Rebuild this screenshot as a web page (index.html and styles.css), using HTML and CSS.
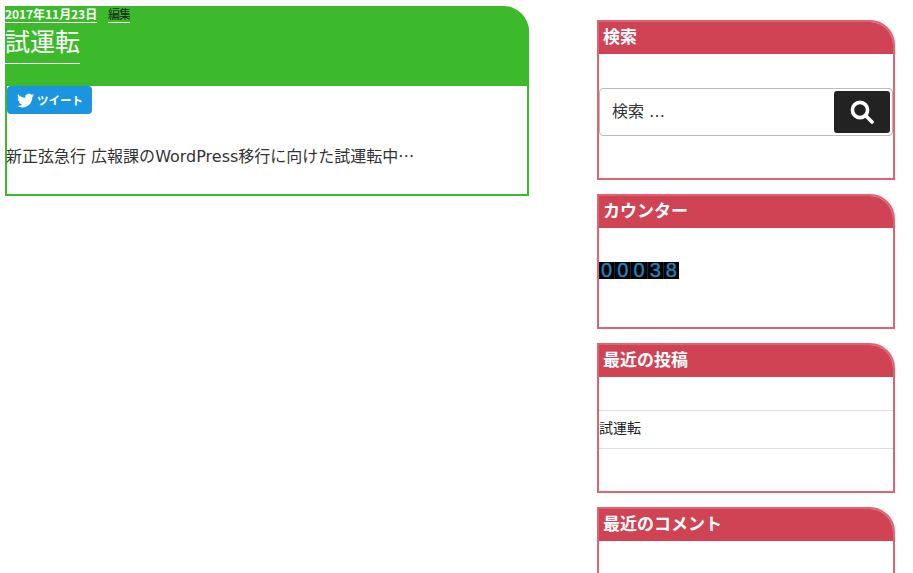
FILE: index.html
```html
<!DOCTYPE html>
<html lang="ja">
<head>
<meta charset="utf-8">
<title>試運転</title>
<link rel="stylesheet" href="styles.css">
</head>
<body>
<div class="page">
  <main class="main">
    <article class="card">
      <header class="card-head">
        <div class="meta"><a class="date">2017年11月23日</a><a class="edit">編集</a></div>
        <h1 class="title"><span>試運転</span></h1>
      </header>
      <a class="tweet">
        <svg class="bird" viewBox="0 0 24 24"><path d="M23.953 4.57a10 10 0 01-2.825.775 4.958 4.958 0 002.163-2.723c-.951.555-2.005.959-3.127 1.184a4.92 4.92 0 00-8.384 4.482C7.69 8.095 4.067 6.13 1.64 3.162a4.822 4.822 0 00-.666 2.475c0 1.71.87 3.213 2.188 4.096a4.904 4.904 0 01-2.228-.616v.06a4.923 4.923 0 003.946 4.827 4.996 4.996 0 01-2.212.085 4.936 4.936 0 004.604 3.417 9.867 9.867 0 01-6.102 2.105c-.39 0-.779-.023-1.17-.067a13.995 13.995 0 007.557 2.209c9.053 0 13.998-7.496 13.998-13.985 0-.21 0-.42-.015-.63A9.935 9.935 0 0024 4.59z"/></svg>
        <span>ツイート</span>
      </a>
      <p class="excerpt">新正弦急行<span class="latin"> </span>広報課の<span class="latin">WordPress</span>移行に向けた試運転中…</p>
    </article>
  </main>
  <aside class="side">
    <section class="widget w-search">
      <h2 class="widget-title">検索</h2>
      <form class="search">
        <span class="search-text">検索 …</span>
        <span class="search-btn">
          <svg class="lens" viewBox="0 0 24 24"><circle cx="10" cy="10" r="7.6"/><path d="M15.6 15.6 L22 22"/></svg>
        </span>
      </form>
    </section>
    <section class="widget w-counter">
      <h2 class="widget-title">カウンター</h2>
      <div class="counter"><span>0</span><span>0</span><span>0</span><span>3</span><span>8</span></div>
    </section>
    <section class="widget w-recent">
      <h2 class="widget-title">最近の投稿</h2>
      <ul class="posts"><li>試運転</li></ul>
    </section>
    <section class="widget w-comments">
      <h2 class="widget-title">最近のコメント</h2>
    </section>
  </aside>
</div>
</body>
</html>
```

FILE: styles.css
```css
* { box-sizing: border-box; }
html, body { margin: 0; padding: 0; height: 573px; overflow: hidden; background: #fff; }
body { font-family: "Noto Sans CJK JP", "Noto Sans", sans-serif; color: #333; }

.page { display: flex; align-items: flex-start; padding-left: 5px; height: 573px; overflow: hidden; }
.main { width: 524px; margin-top: 6px; }
.side { width: 298px; margin-left: 68px; margin-top: 20px; display: flex; flex-direction: column; gap: 14px; }

.card { height: 190px; border: 2px solid #3cba2c; border-top: 0; border-top-right-radius: 26px; display: flex; flex-direction: column; }
.card-head { height: 80px; margin: 0 -2px; background: #3cba2c; border-top-right-radius: 26px; }
.meta { display: flex; gap: 11px; font-size: 12px; line-height: 15px; height: 17px; }
.date { font-weight: 700; color: #fff; border-bottom: 1px solid #fff; letter-spacing: -0.05px; }
.edit { font-size: 12px; width: 22px; white-space: nowrap; color: #222; border-bottom: 1px solid #fff; overflow: hidden; letter-spacing: -1px; }
.title { margin: 0; font-size: 25px; font-weight: 400; line-height: 35px; color: #fff; }
.title span { display: inline-block; height: 41px; border-bottom: 1px solid #fff; width: 75px; white-space: nowrap; }

.tweet { align-self: flex-start; display: flex; align-items: center; width: 85px; height: 28px; padding-left: 10px; gap: 3px; background: #1b95e0; border-radius: 4px; color: #fff; font-size: 11.5px; font-weight: 700; }
.bird { width: 17px; height: 17px; fill: #fff; flex: none; }
.excerpt { margin: 29px 0 0 -1px; font-size: 16px; line-height: 24px; color: #333; white-space: nowrap; }
.latin { font-family: "DejaVu Sans", sans-serif; font-size: 16px; }

.widget { border: 2px solid #e2636f; border-top-right-radius: 25px; overflow: hidden; }
.widget-title { margin: 0; height: 32px; padding-left: 4px; background: #cf4355; color: #fff; font-size: 17px; font-weight: 700; line-height: 27px; }

.w-search { height: 160px; }
.search { display: flex; align-items: center; justify-content: space-between; height: 48px; margin-top: 34px; padding: 0 2px 0 12px; border: 1px solid #bbb; border-radius: 4px; background: #fff; }
.search-text { font-family: "DejaVu Sans", "Noto Sans CJK JP", sans-serif; font-size: 16px; line-height: 20px; color: #333; }
.search-btn { display: flex; align-items: center; justify-content: center; width: 56px; height: 42px; background: #222; border-radius: 3px; }
.lens { width: 24px; height: 24px; fill: none; stroke: #fff; stroke-width: 3.6; stroke-linecap: round; }

.w-counter { height: 135px; }
.counter { display: flex; width: 80px; height: 17px; margin-top: 34px; background: #000; }
.counter span { flex: 1; text-align: center; color: #1e86bf; font-family: "Liberation Sans", sans-serif; font-size: 20px; line-height: 17px; -webkit-text-stroke: 0.4px #1e86bf; border-right: 1px solid #0b2a3a; }
.counter span:last-child { border-right: 0; }

.w-recent { height: 150px; }
.posts { list-style: none; margin: 33px 0 0; padding: 0; border-top: 1px solid #ddd; border-bottom: 1px solid #ddd; }
.posts li { height: 37px; font-size: 14px; line-height: 33px; color: #222; }

.w-comments { height: 160px; flex: none; }
```
